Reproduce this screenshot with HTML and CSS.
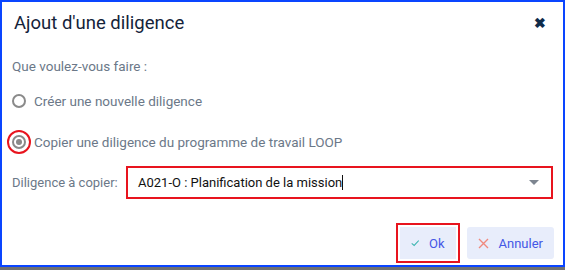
FILE: index.html
```html
<!DOCTYPE html>
<html lang="fr">
<head>
    <meta charset="UTF-8">
    <title>Ajout d'une diligence</title>
    <link rel="stylesheet" href="styles.css">
</head>
<body>
    <div class="dialog">
        <!-- Header -->
        <div class="dialog-header">
            <h1>Ajout d'une diligence</h1>
            <span class="close">&#10006;</span>
        </div>

        <!-- Body -->
        <div class="dialog-body">
            <p class="question">Que voulez-vous faire :</p>

            <label class="radio-row">
                <span class="radio"></span>
                <span>Créer une nouvelle diligence</span>
            </label>
            <label class="radio-row">
                <span class="radio checked"></span>
                <span>Copier une diligence du programme de travail LOOP</span>
            </label>

            <div class="field-row">
                <span class="field-label">Diligence à copier:</span>
                <div class="select-box">
                    <span class="select-text">A021-O : Planification de la mission<span class="caret"></span></span>
                    <span class="arrow"></span>
                </div>
            </div>
        </div>

        <!-- Footer -->
        <div class="dialog-footer">
            <div class="ok-wrap">
                <button type="button" class="button">
                    <svg width="12" height="10" viewBox="0 0 12 10"><path d="M1 5.5 L4.5 8.5 L11 1.5" fill="none" stroke="#3bb5b0" stroke-width="1.5"/></svg>
                    Ok
                </button>
            </div>
            <button type="button" class="button">
                <svg width="11" height="11" viewBox="0 0 11 11"><path d="M1 1 L10 10 M10 1 L1 10" fill="none" stroke="#f08a7e" stroke-width="1.4"/></svg>
                Annuler
            </button>
        </div>
    </div>
</body>
</html>
```

FILE: styles.css
```css
body {
    margin: 0;
    background-color: #707070;
    font-family: 'Roboto', sans-serif;
}
.dialog {
    width: 561px;
    height: 263px;
    background-color: #ffffff;
    border: 2px solid #0a45ff;
    box-shadow: 2px 0 0 #ffffff;
    display: flex;
    flex-direction: column;
}

/* Header */
.dialog-header {
    display: flex;
    justify-content: space-between;
    align-items: center;
    padding: 5px 17px 0 12px;
    height: 31px;
}
.dialog-header h1 {
    margin: 0;
    font-size: 18.5px;
    font-weight: 400;
    color: #14233a;
}
.close {
    font-size: 14px;
    color: #0f2b4a;
    font-weight: bold;
}

/* Body */
.dialog-body {
    padding: 0 10px;
    color: #6b7888;
    font-size: 13.5px;
}
.question {
    margin: 21px 0 0 0;
    height: 15px;
    line-height: 15px;
}
.radio-row {
    display: flex;
    align-items: center;
    gap: 8px;
    height: 16px;
    margin-top: 19px;
}
.radio-row + .radio-row {
    margin-top: 25px;
}
.radio {
    width: 10px;
    height: 10px;
    border: 2px solid #8a8a8a;
    border-radius: 50%;
    position: relative;
}
.radio.checked::after {
    content: '';
    position: absolute;
    left: 2px;
    top: 2px;
    width: 6px;
    height: 6px;
    border-radius: 50%;
    background-color: #8a8a8a;
}
.radio.checked::before {
    content: '';
    position: absolute;
    left: -7px;
    top: -7px;
    width: 20px;
    height: 20px;
    border: 2px solid #e8141e;
    border-radius: 50%;
}

.field-row {
    display: flex;
    align-items: center;
    margin-top: 16px;
    font-size: 13px;
}
.field-label {
    width: 114px;
}
.select-box {
    flex: 1;
    height: 29px;
    border: 2px solid #e8141e;
    display: flex;
    align-items: center;
    justify-content: space-between;
    padding: 0 12px 0 10px;
}
.select-text {
    color: #111111;
    font-size: 13px;
}
.caret {
    display: inline-block;
    width: 1px;
    height: 15px;
    background-color: #111111;
    vertical-align: -3px;
}
.arrow {
    width: 0;
    height: 0;
    border-left: 5px solid transparent;
    border-right: 5px solid transparent;
    border-top: 5px solid #7d8590;
}

/* Footer */
.dialog-footer {
    margin-top: auto;
    display: flex;
    justify-content: flex-end;
    align-items: center;
    gap: 7px;
    padding: 0 9px 2px 0;
}
.ok-wrap {
    border: 2px solid #e8141e;
    padding: 2px;
    display: flex;
}
.button {
    display: flex;
    align-items: center;
    gap: 10px;
    height: 32px;
    padding: 0 11px 0 11px;
    background-color: #e8edfb;
    border: none;
    border-radius: 3px;
    color: #4457e6;
    font-family: 'Roboto', sans-serif;
    font-size: 13px;
}
.ok-wrap .button {
    width: 56px;
    height: 32px;
    border-radius: 0;
}
```
